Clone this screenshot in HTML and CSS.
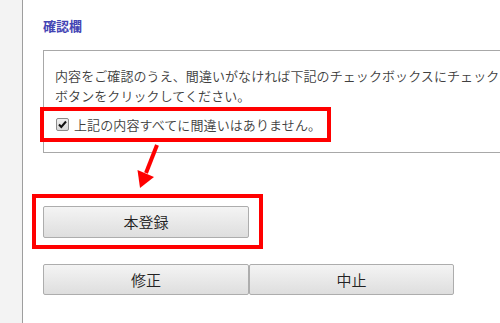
FILE: index.html
```html
<!DOCTYPE html>
<html lang="ja">
<head>
<meta charset="utf-8">
<title>確認欄</title>
<link rel="stylesheet" href="styles.css">
</head>
<body>
<div class="page">
  <div class="sidebar"></div>
  <main class="main">
    <h2 class="title">確認欄</h2>
    <div class="confirm-box">
      <p class="notice"><span>内容をご確認のうえ、間違いがなければ下記のチェックボックスにチェック</span><br><span>ボタンをクリックしてください。</span></p>
      <label class="check-row highlight">
        <span class="checkbox"><svg width="11" height="11" viewBox="0 0 11 11"><path d="M2 5.5 L4.3 8 L9 2.5" fill="none" stroke="#111" stroke-width="2"/></svg></span>
        <span class="check-label">上記の内容すべてに間違いはありません。</span>
      </label>
    </div>
    <div class="submit-frame highlight">
      <button class="btn btn-wide" type="button">本登録</button>
    </div>
    <div class="btn-row">
      <button class="btn btn-wide" type="button">修正</button>
      <button class="btn btn-half" type="button">中止</button>
    </div>
  </main>
  <svg class="arrow" width="500" height="323" viewBox="0 0 500 323">
    <line x1="157" y1="145" x2="146" y2="173" stroke="#ff0000" stroke-width="4"/>
    <polygon points="140,188 137.5,170 154,177" fill="#ff0000"/>
  </svg>
</div>
</body>
</html>
```

FILE: styles.css
```css
html, body {
  margin: 0;
  padding: 0;
  background: #ffffff;
}
body {
  width: 500px;
  height: 323px;
  overflow: hidden;
  font-family: "Noto Sans CJK JP", "Noto Sans", sans-serif;
  color: #404040;
}
.page {
  position: relative;
  display: flex;
  min-height: 323px;
}
.sidebar {
  width: 22px;
  flex: none;
  background: #f3f3f3;
  border-right: 1px solid #9e9e9e;
}
.main {
  flex: 1;
  padding: 16px 0 0 20px;
  min-width: 0;
}
.title {
  margin: 0 0 14px;
  font-size: 13px;
  line-height: 20px;
  font-weight: bold;
  color: #4444b4;
}
.confirm-box {
  width: 600px;
  border: 1px solid #a8a8a8;
  border-right: none;
  padding: 15px 0 10px 11px;
}
.notice {
  margin: 0;
  font-size: 13px;
  line-height: 20px;
  font-weight: 350;
  letter-spacing: 0.08px;
  white-space: nowrap;
}
.highlight {
  border: 4px solid #ff0000;
  box-sizing: border-box;
}
.check-row {
  display: flex;
  align-items: center;
  width: 291px;
  height: 35px;
  margin: 1px 0 0 -15px;
  padding-left: 12px;
}
.checkbox {
  width: 11px;
  height: 11px;
  border: 1px solid #8c8c8c;
  border-radius: 2px;
  background: linear-gradient(#f0f0f0, #d8d8d8);
  display: flex;
  align-items: center;
  justify-content: center;
  flex: none;
}
.check-label {
  margin-left: 5px;
  font-size: 13px;
  line-height: 20px;
  font-weight: 350;
  letter-spacing: 0.1px;
  white-space: nowrap;
}
.submit-frame {
  width: 231px;
  margin: 41px 0 0 -11px;
  padding: 8px 10px 7px 7px;
}
.btn {
  display: block;
  box-sizing: border-box;
  height: 32px;
  margin: 0;
  padding: 0;
  border: 1px solid #adadad;
  border-radius: 2px;
  background: linear-gradient(#f4f4f4, #dedede);
  font-family: "Noto Sans CJK JP", "Noto Sans", sans-serif;
  font-size: 15px;
  font-weight: 350;
  color: #222222;
  line-height: 20px;
}
.btn-wide {
  width: 206px;
}
.btn-half {
  width: 205px;
}
.btn-row {
  display: flex;
  margin-top: 15px;
}
.btn-row .btn {
  height: 31px;
}
.arrow {
  position: absolute;
  left: 0;
  top: 0;
  pointer-events: none;
}
```
